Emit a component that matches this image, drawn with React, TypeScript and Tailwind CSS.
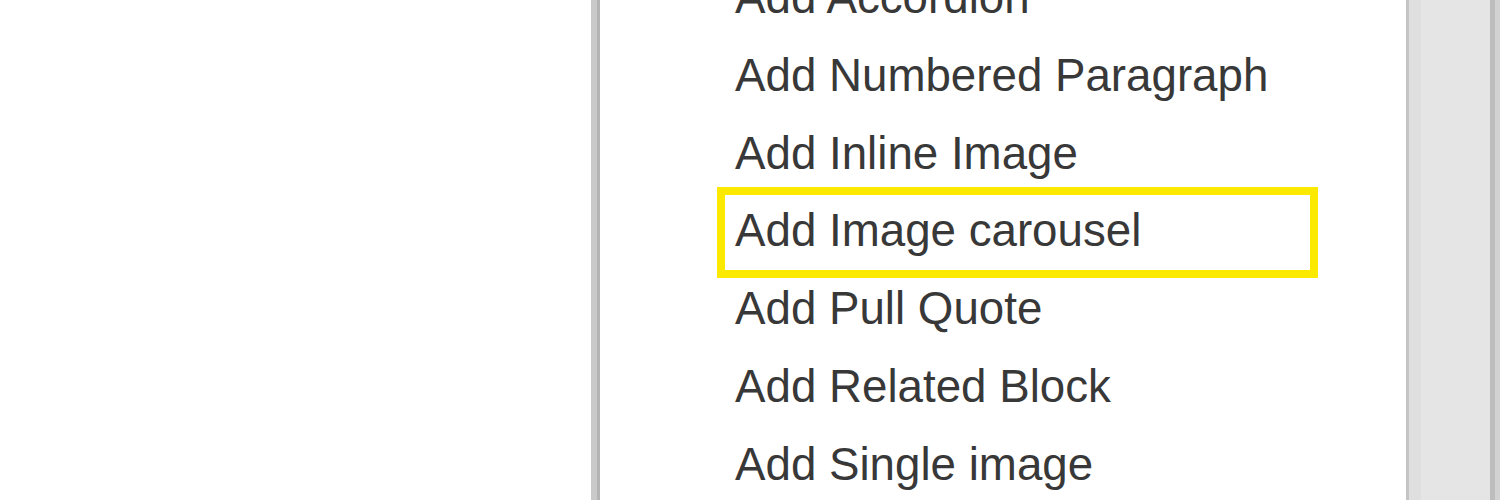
import React from "react";

const items = [
  "Add Accordion",
  "Add Numbered Paragraph",
  "Add Inline Image",
  "Add Image carousel",
  "Add Pull Quote",
  "Add Related Block",
  "Add Single image",
];

export default function App() {
  return (
    <div className="flex h-[500px] w-[1500px] overflow-hidden bg-white">
      <div className="w-[591px] shrink-0 bg-white" />
      <div className="flex h-full w-[9px] shrink-0">
        <div className="w-[6px] bg-[#c9c9c9]" />
        <div className="w-[3px] bg-[#b4b4b4]" />
      </div>
      <div className="relative h-full w-[806px] shrink-0 overflow-hidden bg-white">
        <ul
          className="mt-[-41px] flex flex-col text-[#383838]"
          style={{ fontFamily: '"Liberation Sans", Arial, sans-serif' }}
        >
          {items.map((label, i) => (
            <li
              key={label}
              className="relative h-[77.8px] pl-[135px] text-[45.7px] leading-[77.8px] whitespace-nowrap"
            >
              {label}
              {i === 3 && (
                <span className="pointer-events-none absolute left-[117px] top-[-5px] h-[91px] w-[601px] border-[8px] border-[#fbe900]" />
              )}
            </li>
          ))}
        </ul>
      </div>
      <div className="flex h-full flex-1">
        <div className="w-[3px] bg-[#c4c4c4]" />
        <div className="w-[12px] bg-[#dfdfdf]" />
        <div className="flex-1 bg-[#e5e5e5]" />
        <div className="w-[5px] bg-[#bdbdbd]" />
        <div className="w-[5px] bg-[#d2d2d2]" />
      </div>
    </div>
  );
}
